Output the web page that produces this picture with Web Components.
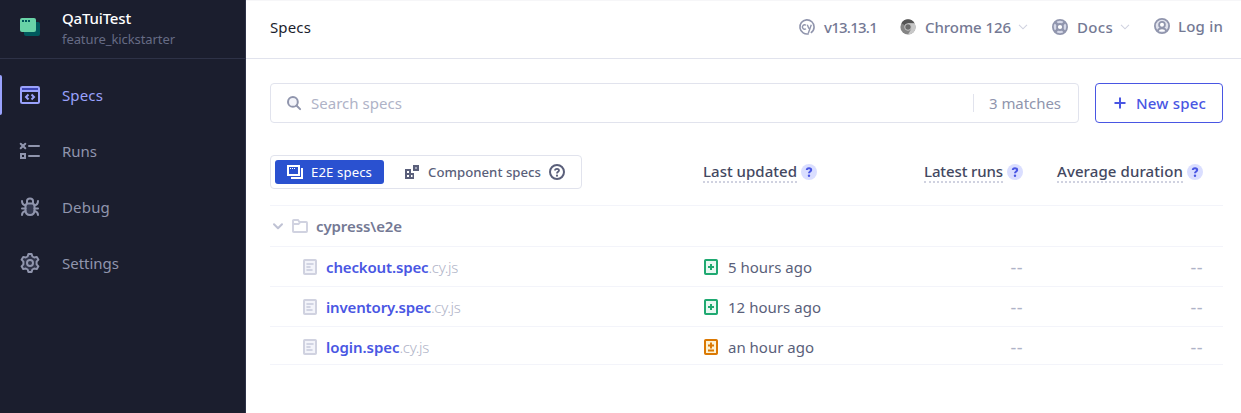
<!DOCTYPE html>
<html lang="en"><head><meta charset="utf-8"><title>Specs</title>
<style>html,body{margin:0;height:100%;background:#fff;font-family:"Noto Sans","Open Sans",sans-serif;overflow:hidden}</style></head>
<body><cy-app></cy-app>
<script>
const define=(name,markup,after)=>{
  const t=document.createElement('template');t.innerHTML=markup;
  customElements.define(name,class extends HTMLElement{
    connectedCallback(){
      if(this.shadowRoot)return;
      this.attachShadow({mode:'open'}).append(t.content.cloneNode(true));
      if(after)after(this,this.shadowRoot);
    }
  });
};
const icons={
 logo:[20,18,'<rect x="4" y="4" width="16" height="14" rx="2" fill="#00595d"/><rect x="0" y="0" width="16" height="14" rx="2" fill="#69d3a7"/><path d="M2 3h2M5 3h2M8 3h2" stroke="#00595d" stroke-width="2"/>'],
 specs:[20,18,'<rect x="1" y="1" width="18" height="16" rx="1.3" fill="none" stroke="#9aa2fc" stroke-width="2"/><path d="M2 3h16" stroke="#3d45b5" stroke-width="2"/><path d="M1 5h18" stroke="#9aa2fc" stroke-width="2"/><path d="M8.500 8.500 6 11l2.500 2.500M11.500 8.500 14 11l-2.500 2.500" fill="none" stroke="#9aa2fc" stroke-width="2"/>'],
 runs:[20,16,'<g fill="none" stroke="#9095ad" stroke-width="2"><path d="M.7.7l4.600 4.600M5.300.7.7 5.300M9 3h10M9 13h10" stroke-linecap="round"/><rect x="1" y="11" width="4" height="4"/></g>'],
 debug:[20,20,'<g fill="none" stroke="#9095ad" stroke-width="2" stroke-linecap="round"><path d="M5.500 9c0-1.700 1-2.500 2.500-2.500h4c1.500 0 2.500.8 2.500 2.500v4c0 3-1.700 5-4.500 5s-4.500-2-4.500-5z" fill="#33384f"/><path d="M7 6V4c0-3.500 6-3.500 6 0v2M2 4c0 2.500 1 4 3.500 4.500M18 4c0 2.500-1 4-3.500 4.500M2 11.500h3.500M14.500 11.500H18M2 18c0-2 1-3.500 3.500-4M18 18c0-2-1-3.500-3.500-4"/></g>'],
 settings:[20,20,'<g fill="none" stroke="#9095ad" stroke-width="2" stroke-linejoin="round"><path fill="#2e3247" d="M8.400 1h3.200l.8 2.500 1.800 1 2.600-.6 1.600 2.800-1.800 2v2.600l1.800 2-1.600 2.800-2.600-.6-1.800 1-.8 2.500H8.400l-.8-2.500-1.800-1-2.600.6-1.600-2.800 1.800-2V8.700l-1.800-2 1.600-2.800 2.600.6 1.800-1z"/><circle cx="10" cy="10" r="3"/></g>'],
 cy:[16,16,'<path d="M9.800 14.800A7.100 7.100 0 1 1 15.100 8c0 2.600-1.300 4.600-3.300 5.900" fill="none" stroke="#9095ad" stroke-width="1.600"/><path d="M7 6.300a2.200 2.200 0 1 0 0 3.400M8.300 5.800l1.700 4M12.300 5.800l-3 8.400" fill="none" stroke="#9095ad" stroke-width="1.400"/>'],
 chrome:[16,16,'<circle cx="8" cy="8" r="7.600" fill="#858585"/><path d="M8 8 1.400 4.200A7.600 7.600 0 0 1 14.600 4.200H8z" fill="#555"/><path d="M8 4.200h6.600A7.600 7.600 0 0 1 8 15.600l3.300-5.700z" fill="#c8c8c8"/><circle cx="8" cy="8" r="3.300" fill="#6b6b6b" stroke="#cfcfcf" stroke-width=".9"/>'],
 docs:[16,16,'<g fill="none" stroke="#9095ad"><circle cx="8" cy="8" r="5" stroke="#d5d8e8" stroke-width="3"/><path d="m3.200 3.200 2.600 2.600m4.400 4.400 2.600 2.600m0-9.600-2.600 2.600m-4.400 4.400-2.600 2.600" stroke-width="2.400"/><circle cx="8" cy="8" r="7.100" stroke-width="1.800"/><circle cx="8" cy="8" r="3" stroke-width="1.800"/></g>'],
 user:[16,16,'<g fill="#e1e3ed" stroke="#9095ad" stroke-width="1.800"><circle cx="8" cy="8" r="7.100"/><path d="M3.800 13c.4-2 2-2.600 4.200-2.600s3.800.6 4.200 2.600" fill="#fff"/><circle cx="8" cy="6.700" r="2.900" fill="#fff"/></g>'],
 chevlight:[10,6,'<path d="m1 .8 4 4 4-4" fill="none" stroke="#d0d2e0" stroke-width="1.100"/>'],
 chev:[10,7,'<path d="m1 1.200 4 4 4-4" fill="none" stroke="#bfc2d4" stroke-width="2" stroke-linecap="round" stroke-linejoin="round"/>'],
 search:[14,14,'<circle cx="5.900" cy="5.900" r="4.900" fill="#f3f4fa" stroke="#9095ad" stroke-width="2"/><path d="m9.500 9.500 3.600 3.600" stroke="#9095ad" stroke-width="2" stroke-linecap="round"/>'],
 plus:[12,12,'<path d="M6 .5v11M.5 6h11" stroke="#4956e3" stroke-width="2"/>'],
 e2e:[16,14,'<g fill="none" stroke="#fff" stroke-width="2"><path d="M1 1h11v9H1zM15 3v10H4"/><path d="M3 3.500h1M5 3.500h1M7 3.500h1" stroke-width="1"/></g>'],
 comp:[14,14,'<path d="M8 0h6v6H8zM0 4h6v4h3v6H0z" fill="#5a5f7a"/><path d="M10 2h2v2h-2z" fill="#a5a9bc"/><path d="M2 6h2v2H2zM2 10h2v2H2zM6 10h1.500v2H6z" fill="#fff"/>'],
 help:[16,16,'<circle cx="8" cy="8" r="7" fill="none" stroke="#5a5f7a" stroke-width="2"/><path d="M6 6.600C6 4.200 10 4.300 10 6.500 10 7.900 8 7.800 8 9.400" fill="none" stroke="#5a5f7a" stroke-width="1.800"/><circle cx="8" cy="11.700" r="1.100" fill="#5a5f7a"/>'],
 hint:[16,16,'<circle cx="8" cy="8" r="8" fill="#dadeff"/><path d="M5.800 5.900C5.800 3.600 10.200 3.700 10.200 5.900 10.200 7.500 8 7.500 8 9.300" fill="none" stroke="#4956e3" stroke-width="2"/><circle cx="8" cy="11.800" r="1.200" fill="#4956e3"/>'],
 folder:[16,14,'<path d="M1 12.200V1.800Q1 1 1.800 1H6l1.500 2h6.700q.8 0 .8.800v8.400q0 .8-.8.800H1.800q-.8 0-.8-.8zM1 5h5.500L8 3.300" fill="none" stroke="#d0d2e0" stroke-width="1.900"/>'],
 file:[14,16,'<rect x="1" y="1" width="12" height="14" rx=".8" fill="#f3f4fa" stroke="#d0d2e0" stroke-width="2"/><path d="M4 5h6M4 8h3M4 11h5" stroke="#c6c9db" stroke-width="1.600" stroke-linecap="round"/>'],
 added:[14,16,'<rect x="1" y="1" width="12" height="14" rx=".8" fill="#e9f9f2" stroke="#1fa971" stroke-width="2"/><path d="M7 5v6M4 8h6" stroke="#1fa971" stroke-width="2"/>'],
 modified:[14,16,'<rect x="1" y="1" width="12" height="14" rx=".8" fill="#fdf3d5" stroke="#db7903" stroke-width="2"/><path d="M7 3.500v6M4 6.500h6M4 11.500h6" stroke="#db7903" stroke-width="1.900"/>']
};
define('ui-icon','<style>:host{display:block;flex:none}svg{display:block;overflow:visible}</style>',(el,r)=>{
  const [w,h,b]=icons[el.getAttribute('name')];
  r.innerHTML+=`<svg width="${w}" height="${h}" viewBox="0 0 ${w} ${h}">${b}</svg>`;
});
/* A single-line label whose tracking is tuned to its measured width. */
define('ui-label','<style>:host{display:block;flex:none;white-space:pre;font-size:15px;line-height:24px}span{display:inline-block}</style><span><slot></slot></span>',(el,r)=>{
  const s=r.querySelector('span'),w=+el.getAttribute('w');
  s.style.letterSpacing=(w-s.getBoundingClientRect().width)/el.textContent.length+'px';
  el.style.width=w+'px';
});
define('nav-item',`<style>
:host{display:flex;height:40px;margin-bottom:16px;align-items:center;color:#9095ad;padding-left:20px}
:host([active]){color:#9aa2fc}
:host([active])::before{content:"";width:2px;height:40px;background:#9aa2fc;border-radius:0 3px 3px 0;margin-left:-20px;margin-right:18px}
.i{width:20px;display:grid;place-items:center;margin-right:22px}
</style><span class="i"><slot name="icon"></slot></span><slot></slot>`);
define('side-bar',`<style>
:host{display:block;box-sizing:border-box;width:246px;height:100%;background:#1b1e2e;border-right:1px solid #2e3247}
header{display:flex;height:58px;border-bottom:1px solid #2e3247;box-sizing:content-box;padding-left:20px}
header ui-icon{margin:18px 22px 0 0}
.t{padding-top:6px}.p{color:#fff}.b{color:#666b85;font-size:13px;line-height:20px;margin-top:-1px}
nav{padding-top:16px}
</style><header><ui-icon name="logo"></ui-icon><div class="t"><ui-label class="p" w="69" style="font-weight:500">QaTuiTest</ui-label><ui-label class="b" w="113">feature_kickstarter</ui-label></div></header>
<nav><nav-item active><ui-icon slot="icon" name="specs"></ui-icon><ui-label w="41">Specs</ui-label></nav-item>
<nav-item><ui-icon slot="icon" name="runs"></ui-icon><ui-label w="35">Runs</ui-label></nav-item>
<nav-item><ui-icon slot="icon" name="debug"></ui-icon><ui-label w="48">Debug</ui-label></nav-item>
<nav-item><ui-icon slot="icon" name="settings"></ui-icon><ui-label w="57">Settings</ui-label></nav-item></nav>`);
define('top-bar',`<style>
:host{display:flex;box-sizing:border-box;height:59px;align-items:center;border-bottom:1px solid #e1e3ed;border-top:1px solid #f6f6f8;padding:0 18px 5px 24px;color:#747994;font-weight:500}
.title{color:#1b1e2e;font-weight:400;margin-right:auto}
div{display:flex;align-items:center;gap:8px;margin-right:24px}.v{margin-right:23px}.c{margin-right:24px}.d{margin-right:24px}.u{position:relative;top:-1px;margin:0}
.v ui-icon,.c ui-icon:first-child,.d ui-icon:first-child{margin-right:1px}.v,.c,.d{gap:8px}.d ui-label,.c ui-label{margin-right:-1px}
</style><ui-label class="title" w="41">Specs</ui-label>
<div class="v"><ui-icon name="cy"></ui-icon><ui-label w="53">v13.13.1</ui-label></div>
<div class="c"><ui-icon name="chrome"></ui-icon><ui-label w="86">Chrome 126</ui-label><ui-icon name="chevlight"></ui-icon></div>
<div class="d"><ui-icon name="docs"></ui-icon><ui-label w="36">Docs</ui-label><ui-icon name="chevlight"></ui-icon></div>
<div class="u"><ui-icon name="user"></ui-icon><ui-label w="45">Log in</ui-label></div>`);
define('search-bar',`<style>
:host{display:flex;gap:16px;height:40px}
.box{flex:1;display:flex;align-items:center;border:1px solid #e1e3ed;border-radius:4px;padding:0 17px 0 16px;color:#afb3c7}
.box ui-label{margin-left:10px}.m{margin-left:auto;height:18px;border-left:1px solid #e1e3ed;display:flex;align-items:center;color:#9095ad}
.m ui-label{margin-left:15px}
.new{box-sizing:border-box;width:128px;border:1px solid #4956e3;border-radius:4px;display:flex;align-items:center;color:#4956e3;gap:10px;padding-left:18px;font-weight:500}
</style><div class="box"><ui-icon name="search"></ui-icon><ui-label w="91">Search specs</ui-label><span class="m"><ui-label w="72">3 matches</ui-label></span></div>
<div class="new"><ui-icon name="plus"></ui-icon><ui-label w="70">New spec</ui-label></div>`);
define('type-switch',`<style>
:host{display:flex;box-sizing:border-box;width:312px;height:34px;border:1px solid #e1e3ed;border-radius:4px;padding:4px;color:#5a5f7a;font-weight:500}
ui-label{font-size:13.200px}div{display:flex;align-items:center;height:24px}
.on{background:#2a51d0;color:#fff;border-radius:3px;width:97px;padding-left:12px;gap:8px;font-weight:400}
.off{padding-left:21px;gap:8px}.off ui-label{margin-left:1px}
</style><div class="on"><ui-icon name="e2e"></ui-icon><ui-label w="61">E2E specs</ui-label></div><div class="off"><ui-icon name="comp"></ui-icon><ui-label w="113">Component specs</ui-label><ui-icon name="help"></ui-icon></div>`);
define('column-head',`<style>:host{display:flex;align-items:center;gap:4px;color:#434861;font-weight:500}
.u{box-sizing:border-box;height:22px;margin-bottom:1px;display:flex;align-items:center;border-bottom:2px dotted #d0d2e0}</style><span class="u"><slot></slot></span><ui-icon name="hint"></ui-icon>`);
define('table-row',`<style>
:host{display:grid;box-sizing:border-box;grid-template-columns:433px 140px 180px 180px;align-items:center;height:40px;border-bottom:1px solid #f3f4fa;color:#5a5f7a}
:host([end]){height:38px}
slot{display:flex;align-items:center}slot[name=runs],slot[name=avg]{justify-content:flex-end}
</style><slot name="name"></slot><slot name="date"></slot><slot name="runs"></slot><slot name="avg"></slot>`);
customElements.define('spec-entry',class extends HTMLElement{connectedCallback(){
  const a=n=>this.getAttribute(n),end=this.hasAttribute('end')?' end':'';
  this.attachShadow({mode:'open'}).innerHTML=`<style>:host{display:block}div{display:flex;align-items:center}
.f{padding-left:33px}.f ui-icon{margin-right:9px}.n{color:#4956e3;font-weight:600}.e{color:#afb3c7;font-weight:300}
.d{gap:10px;padding-left:1px}.x{color:#afb3c7;font-size:18px}:host([end]) div{position:relative;top:1px}</style>
<table-row${end}><div class="f" slot="name"><ui-icon name="file"></ui-icon><ui-label class="n" w="${a('nw')}">${a('name')}</ui-label><ui-label class="e" w="29.500">.cy.js</ui-label></div>
<div class="d" slot="date"><ui-icon name="${a('state')}"></ui-icon><ui-label w="${a('dw')}">${a('date')}</ui-label></div><div slot="runs"><ui-label class="x" w="12.500">--</ui-label></div><div slot="avg"><ui-label class="x" w="12.500">--</ui-label></div></table-row>`;
}});
define('spec-table',`<style>
:host{display:block}.head{height:51px;margin-top:-1px}
.folder{height:41px}.g{display:flex;align-items:center;padding-left:3px}.g .c{margin-right:9px}.g ui-label{margin-left:8px;color:#747994;font-weight:600}
type-switch,column-head{margin-bottom:16px}
</style>
<table-row class="head"><type-switch slot="name"></type-switch><column-head slot="date"><ui-label w="94">Last updated</ui-label></column-head><column-head slot="runs"><ui-label w="79">Latest runs</ui-label></column-head><column-head slot="avg"><ui-label w="126">Average duration</ui-label></column-head></table-row>
<table-row class="folder"><div class="g" slot="name"><ui-icon class="c" name="chev"></ui-icon><ui-icon name="folder"></ui-icon><ui-label w="86">cypress\\e2e</ui-label></div></table-row>
<spec-entry name="checkout.spec" nw="102.500" state="added" date="5 hours ago" dw="84"></spec-entry>
<spec-entry name="inventory.spec" nw="105" state="added" date="12 hours ago" dw="93"></spec-entry>
<spec-entry name="login.spec" nw="73.500" state="modified" date="an hour ago" dw="86" end></spec-entry>`);
define('cy-app',`<style>
:host{display:grid;grid-template-columns:246px 1fr;height:100vh;font-family:"Noto Sans","Open Sans",sans-serif}
main{padding:24px 18px 0 24px}spec-table{margin-top:33px}
</style><side-bar></side-bar><section><top-bar></top-bar><main><search-bar></search-bar><spec-table></spec-table></main></section>`);
</script></body></html>
